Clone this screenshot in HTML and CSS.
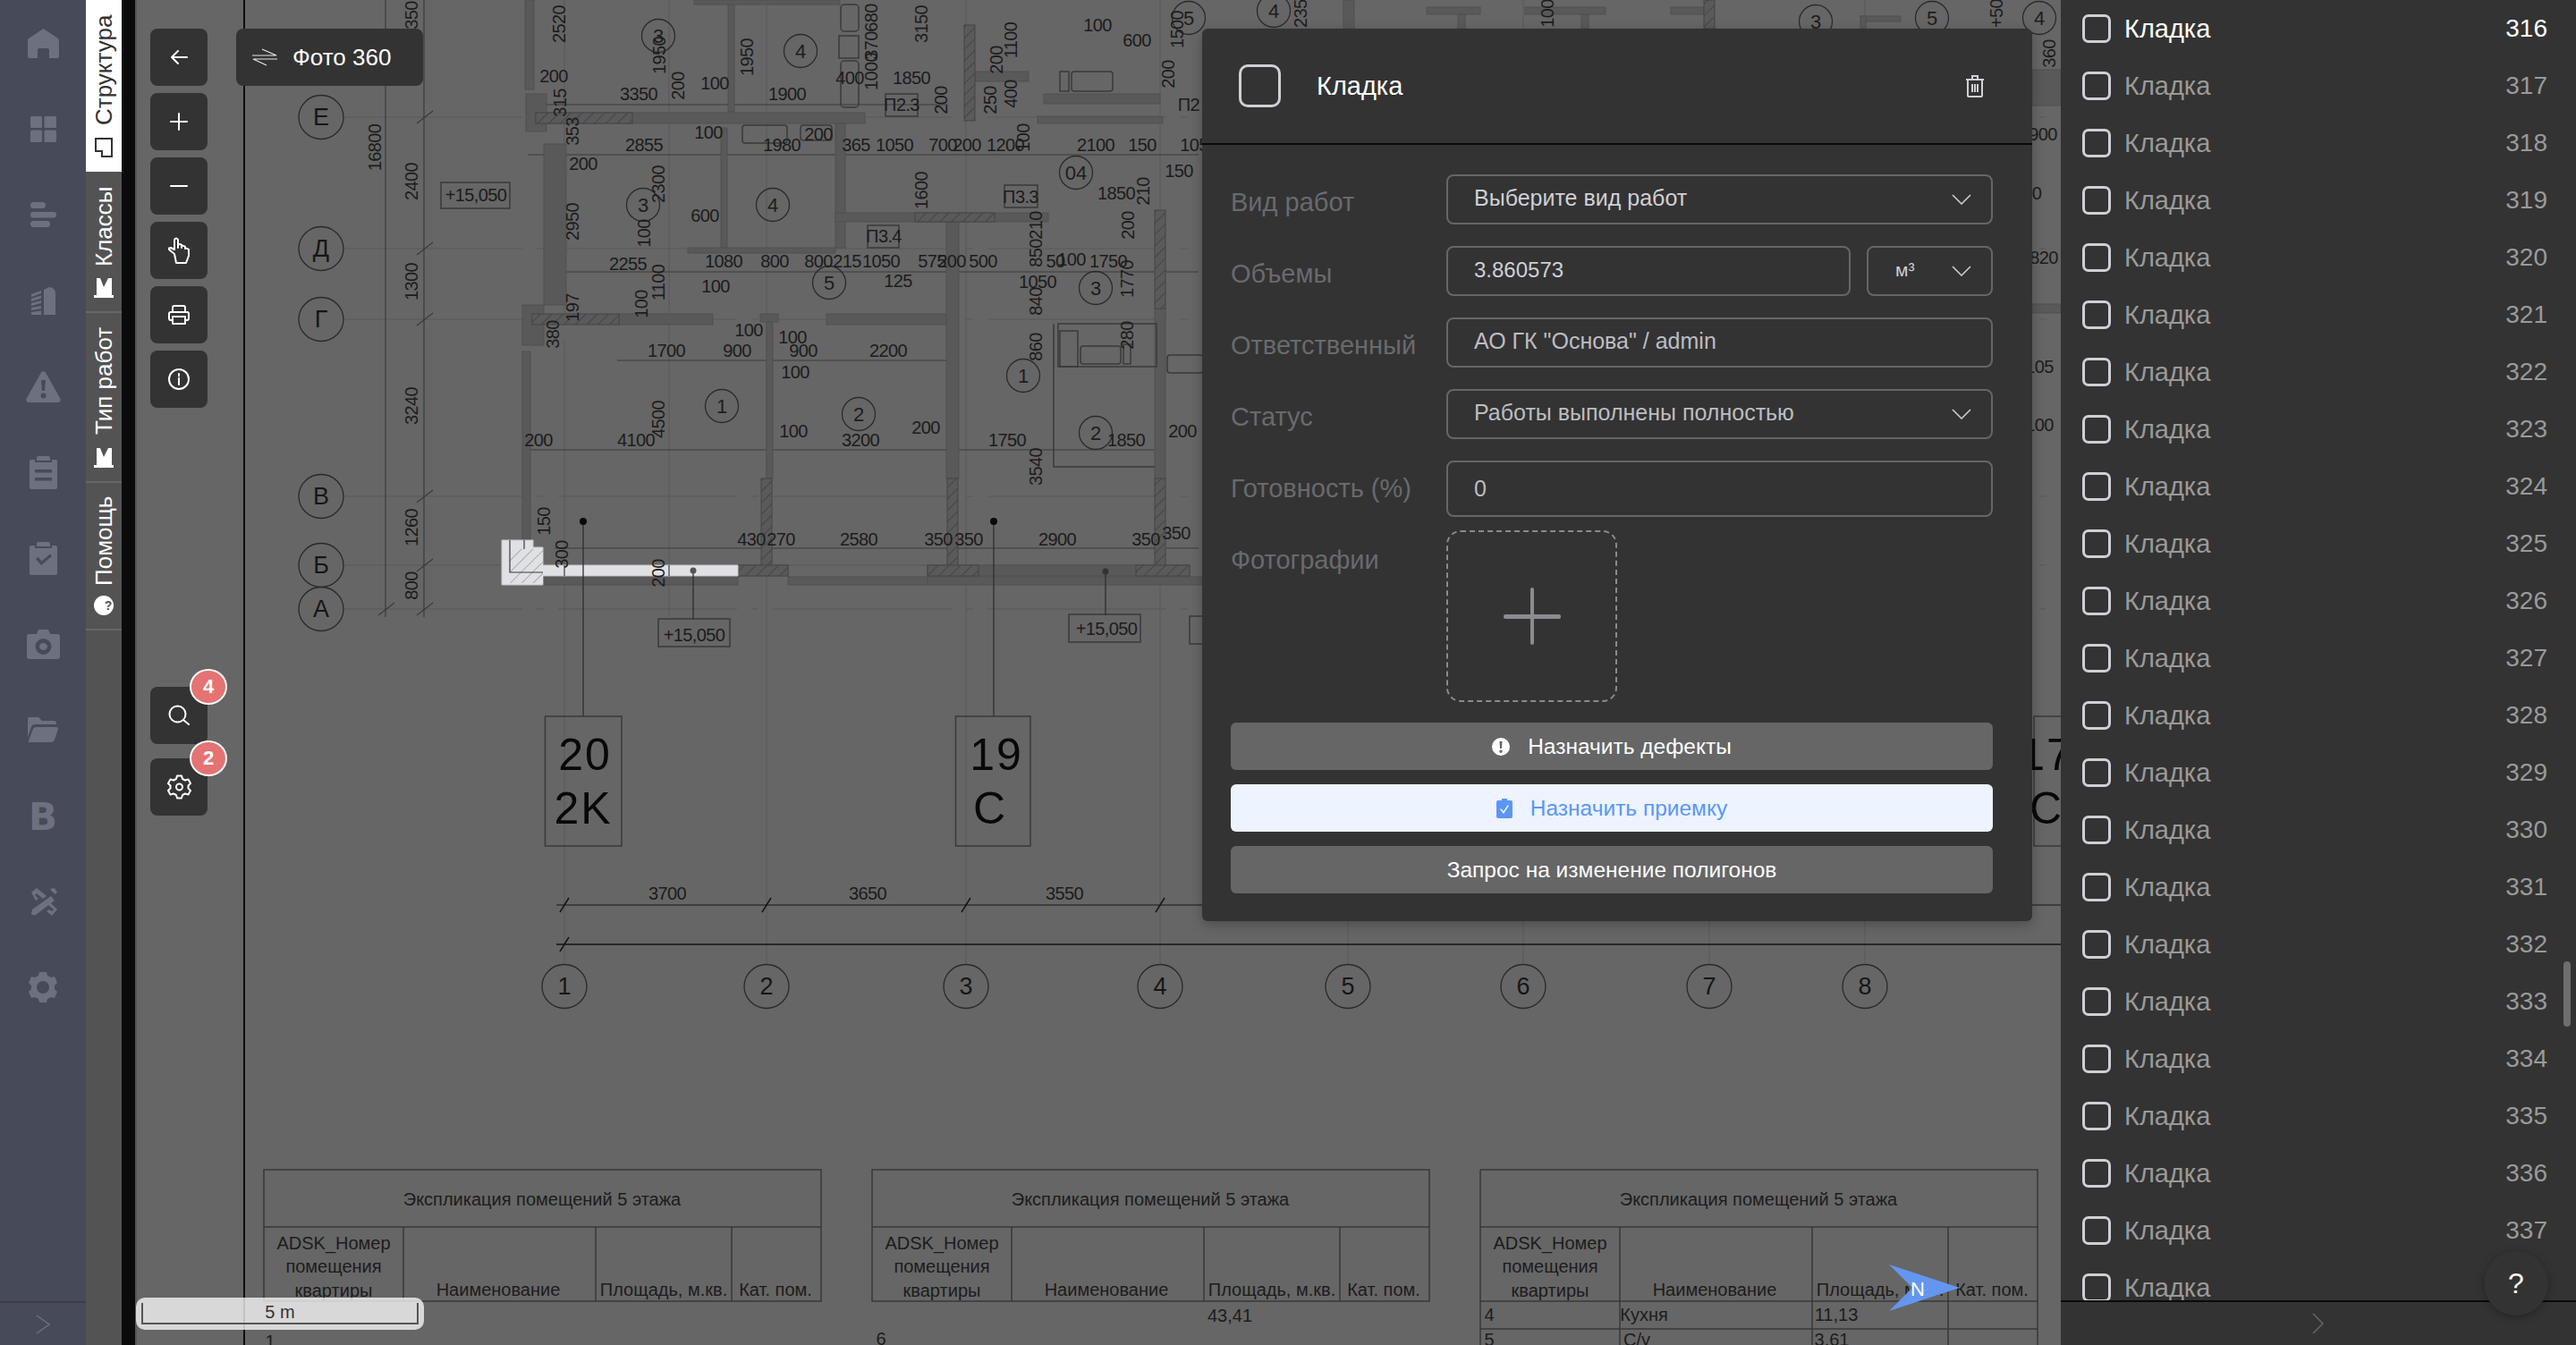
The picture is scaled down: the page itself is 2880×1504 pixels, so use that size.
FILE: index.html
```html
<!DOCTYPE html>
<html lang="ru">
<head>
<meta charset="utf-8">
<title>Кладка</title>
<link rel="stylesheet" href="styles.css">
</head>
<body>
<div class="app">
  <nav class="nav">
    <div class="nav-items">
      <div class="nav-item"><svg width="35" height="33" viewBox="0 0 35 33"><path d="M17.500 0 L34 11 Q35 12 35 14 V31 Q35 33 33 33 H24 V24 Q24 22 22 22 H13 Q11 22 11 24 V33 H2 Q0 33 0 31 V14 Q0 12 1 11Z"/></svg></div>
      <div class="nav-item"><svg width="29" height="29" viewBox="0 0 29 29"><rect width="13" height="13" rx="1.500"/><rect x="15.500" width="13.500" height="13" rx="1.500"/><rect y="15.500" width="13" height="13.500" rx="1.500"/><rect x="15.500" y="15.500" width="13.500" height="13.500" rx="1.500"/></svg></div>
      <div class="nav-item"><svg width="29" height="28" viewBox="0 0 29 28"><rect width="17" height="7" rx="3.500"/><rect y="11" width="29" height="6.500" rx="3.250"/><rect y="21" width="22" height="7" rx="3.500"/></svg></div>
      <div class="nav-item"><svg width="27" height="31" viewBox="0 0 27 31"><path d="M14 3 L20 0 Q27 1 27 7 V31 H14Z M0 8 L11 4 V7 L0 11Z M0 13 L11 9.500 V12.500 L0 16Z M0 18 L11 15 V18 L0 21Z M0 23 L11 21 V24 L0 26Z M0 28 L11 26.500 V31 H0Z"/></svg></div>
      <div class="nav-item"><svg width="39" height="35" viewBox="0 0 39 35"><path fill-rule="evenodd" d="M17 1.500 Q19.500 -1 22 1.500 L38 30 Q40 35 35 35 H4 Q-1 35 1 30Z M17 10 L18 22 H21 L22 10Z M19.500 24.500 A3 3 0 1 0 19.500 30.500 A3 3 0 1 0 19.500 24.500Z"/></svg></div>
      <div class="nav-item"><svg width="31" height="37" viewBox="0 0 31 37"><path fill-rule="evenodd" d="M10 0 H21 Q23 0 23 2 V5 H8 V2 Q8 0 10 0Z M2 4 H6 V7 H25 V4 H29 Q31 4 31 6 V35 Q31 37 29 37 H2 Q0 37 0 35 V6 Q0 4 2 4Z M6 15 V18.500 H25 V15Z M6 24 V27.500 H25 V24Z"/></svg></div>
      <div class="nav-item"><svg width="31" height="37" viewBox="0 0 31 37"><path fill-rule="evenodd" d="M10 0 H21 Q23 0 23 2 V5 H8 V2 Q8 0 10 0Z M2 4 H6 V7 H25 V4 H29 Q31 4 31 6 V35 Q31 37 29 37 H2 Q0 37 0 35 V6 Q0 4 2 4Z M7 19 L13 26 L25 16 L23 13.500 L13.500 21.500 L9.500 16.500Z"/></svg></div>
      <div class="nav-item"><svg width="37" height="33" viewBox="0 0 37 33"><path fill-rule="evenodd" d="M11 5 L13 0 H24 L26 5 H34 Q37 5 37 8 V30 Q37 33 34 33 H3 Q0 33 0 30 V8 Q0 5 3 5Z M18.500 10 A9 9 0 1 0 18.500 28 A9 9 0 1 0 18.500 10Z M18.500 15 A4.500 4 0 1 1 18.500 23 A4.500 4 0 1 1 18.500 15Z"/></svg></div>
      <div class="nav-item"><svg width="34" height="28" viewBox="0 0 34 28"><path d="M2 0 H12 L16 4 H29 Q32 4 32 7 V8 H8 Q5 8 4 11 L0 22 V2 Q0 0 2 0Z M9 11 H32 Q34 11 34 13 L30 25 Q29 28 26 28 H2 Q0 28 1 26 L6 13 Q7 11 9 11Z"/></svg></div>
      <div class="nav-item"><span class="nav-b">B</span></div>
      <div class="nav-item"><svg width="31" height="31" viewBox="0 0 31 31"><path d="M3 24 L24 9 L28 14 L7 30 Q3 31 2 29Z M2 5 L8 0 L19 9 L15 12 L8 6 L6 8 L10 12 L7 14Z M21 19 L24 17 L31 24 L25 31 L19 26 L22 24 L25 26 L27 24Z M23 1 L28 0 L31 5 L29 7 L25 4Z"/></svg></div>
      <div class="nav-item"><svg width="32" height="34" viewBox="0 0 32 34"><path fill-rule="evenodd" d="M12 0 H20 L21 4 L25 6 L29 5 L32 12 L29 15 V19 L32 22 L29 29 L25 28 L21 30 L20 34 H12 L11 30 L7 28 L3 29 L0 22 L3 19 V15 L0 12 L3 5 L7 6 L11 4Z M16 10 A7 7 0 1 0 16 24 A7 7 0 1 0 16 10Z"/></svg></div>
    </div>
    <div class="nav-foot"><svg width="18" height="24" viewBox="0 0 18 24"><path class="chev" d="M2 2 L16 12 L2 22"/></svg></div>
  </nav>

  <aside class="tabs">
    <div class="tab tab-active tab-a">
      <svg class="tab-icon" width="22" height="20" viewBox="0 0 22 20"><path class="tab-line" d="M7 1 H21 V19 H1 V8 H7Z"/></svg>
      <span>Структура</span>
    </div>
    <div class="tab tab-b">
      <svg class="tab-icon" width="22" height="22" viewBox="0 0 22 22"><path class="tab-fill" d="M0 3 H22 V7 L12 11 L22 16 V20 H0Z M0 0 H3 V22 H0Z"/></svg>
      <span>Классы</span>
    </div>
    <div class="tab tab-c">
      <svg class="tab-icon" width="22" height="22" viewBox="0 0 22 22"><path class="tab-fill" d="M0 3 H22 V7 L12 11 L22 16 V20 H0Z M0 0 H3 V22 H0Z"/></svg>
      <span>Тип работ</span>
    </div>
    <div class="tab tab-d">
      <svg class="tab-icon" width="22" height="22" viewBox="0 0 22 22"><circle class="tab-fill" cx="11" cy="11" r="11"/><text class="tab-q" x="11" y="16">?</text></svg>
      <span>Помощь</span>
    </div>
  </aside>

  <div class="gutter"></div>

  <main class="canvas">
    <svg class="plan" width="2153" height="1504" viewBox="151 0 2153 1504">
      <defs>
        <pattern id="hatch" width="9" height="9" patternUnits="userSpaceOnUse" patternTransform="rotate(45)"><rect width="9" height="9" fill="#5a5a5a"/><line x1="0" y1="0" x2="0" y2="9" stroke="#3c3c3c" stroke-width="1.500"/></pattern>
        <pattern id="hatchw" width="9" height="9" patternUnits="userSpaceOnUse" patternTransform="rotate(45)"><rect width="9" height="9" fill="#e0e1e5"/><line x1="0" y1="0" x2="0" y2="9" stroke="#9a9a9a" stroke-width="1.500"/></pattern>
      </defs>

      <rect x="151" y="0" width="2" height="1504" fill="#555"/>
      <rect x="272" y="0" width="2" height="1504" fill="#0f0f0f"/>

      <!-- grid axes -->
      <g class="faint">
        <path d="M631 0V360M631 380V1078M748 0V690M857 0V1078M1080 0V1078M1297 0V1078M1507 0V1078M1703 0V1078M1911 0V1078M2085 0V1078"/>
        <path d="M384 131H2304M384 278H2304M384 357H2304M384 555H2304M384 632H2304M384 681H2304" stroke-dasharray="200 16 8 16"/>
      </g>
      <g class="thin">
        <path d="M431 0V690M474 0V690M610 117H1060M590 173H1340M630 304H1340M690 403H1065M585 503H1290M620 613H1340"/>
        <path d="M466 138L484 124M466 285L484 271M466 364L484 350M466 562L484 548M466 639L484 625M466 688L484 674M423 688L441 674"/>
      </g>

      <!-- walls -->
      <g class="wall">
        <rect x="588" y="105" width="23" height="42"/>
        <rect x="599" y="126" width="368" height="12"/>
        <rect x="608" y="161" width="25" height="180"/>
        <rect x="584" y="341" width="24" height="45"/>
        <rect x="692" y="351" width="105" height="12"/>
        <rect x="924" y="351" width="135" height="12"/>
        <rect x="806" y="143" width="7" height="134"/>
        <rect x="934" y="138" width="11" height="139"/>
        <rect x="769" y="277" width="165" height="6"/>
        <rect x="934" y="238" width="238" height="10"/>
        <rect x="1058" y="248" width="14" height="287"/>
        <rect x="857" y="360" width="7" height="175"/>
        <rect x="850" y="351" width="20" height="9"/>
        <rect x="1291" y="345" width="12" height="190"/>
        <rect x="1167" y="105" width="130" height="11"/>
        <rect x="1160" y="130" width="140" height="8"/>
        <rect x="1087" y="80" width="63" height="11"/>
        <rect x="587" y="0" width="10" height="100"/>
        <rect x="814" y="5" width="7" height="120"/>
        <rect x="776" y="0" width="163" height="5"/>
        <rect x="825" y="632" width="56" height="12"/>
        <rect x="1037" y="632" width="293" height="12"/>
        <rect x="607" y="644" width="218" height="10"/>
        <rect x="881" y="645" width="156" height="9"/>
        <rect x="1037" y="645" width="307" height="9"/>
        <rect x="584" y="393" width="9" height="210"/>
        <rect x="1595" y="8" width="60" height="8"/>
        <rect x="1705" y="8" width="90" height="8"/>
        <rect x="1868" y="8" width="37" height="8"/>
        <rect x="1502" y="0" width="12" height="32"/>
        <rect x="1630" y="16" width="8" height="16"/>
        <rect x="1768" y="16" width="8" height="16"/>
        <rect x="2080" y="18" width="45" height="6"/>
        <rect x="2080" y="18" width="6" height="14"/>
        <rect x="2272" y="78" width="32" height="40"/>
        <rect x="2272" y="340" width="32" height="10"/>
      </g>
      <g class="hatched">
        <rect x="599" y="126" width="108" height="12"/>
        <rect x="595" y="351" width="97" height="12"/>
        <rect x="1023" y="238" width="89" height="10"/>
        <rect x="851" y="535" width="12" height="105"/>
        <rect x="1059" y="535" width="12" height="105"/>
        <rect x="1291" y="235" width="12" height="110"/>
        <rect x="1291" y="535" width="12" height="108"/>
        <rect x="1078" y="28" width="12" height="107"/>
        <rect x="825" y="632" width="56" height="12"/>
        <rect x="1037" y="632" width="57" height="12"/>
        <rect x="1270" y="632" width="60" height="12"/>
        <rect x="1905" y="0" width="12" height="32"/>
      </g>

      <!-- fixtures -->
      <g class="fix">
        <rect x="940" y="5" width="20" height="30" rx="4"/><rect x="938" y="40" width="22" height="25"/><rect x="940" y="68" width="20" height="52" rx="4"/>
        <rect x="830" y="140" width="50" height="20" rx="3"/><rect x="895" y="140" width="35" height="17" rx="3"/>
        <rect x="1198" y="80" width="46" height="22" rx="3"/><rect x="1185" y="80" width="10" height="22"/>
        <rect x="1185" y="370" width="20" height="40"/><rect x="1208" y="387" width="45" height="20" rx="3"/><rect x="1256" y="385" width="8" height="22"/>
        <rect x="1305" y="397" width="40" height="20" rx="3"/>
        <rect x="1183" y="362" width="110" height="48" fill="none"/>
        <path d="M1178 362V522H1291"/>
        <rect x="990" y="105" width="36" height="25"/><rect x="1123" y="207" width="37" height="25"/><rect x="970" y="252" width="35" height="25"/>
        <rect x="493" y="204" width="77" height="29"/>
        <rect x="736" y="692" width="80" height="31"/><rect x="1195" y="687" width="80" height="31"/><rect x="1330" y="689" width="40" height="31"/>
      </g>

      <!-- highlighted element -->
      <path class="hl" d="M561 604 H596 V612 H607 V632 H825 V644 H607 V654 H561Z"/>
      <rect x="570" y="614" width="37" height="38" fill="url(#hatchw)"/>
      <path class="thin" d="M570 604V640H607M586 604V614M631 632V644M748 632V644"/>

      <!-- leaders -->
      <g class="lead">
        <path d="M652 583V801M1111 583V801M775 638V692M1236 638V688"/>
      </g>
      <circle cx="652" cy="583" r="4" fill="#0a0a0a"/><circle cx="1111" cy="583" r="4" fill="#0a0a0a"/><circle cx="775" cy="638" r="3.500" fill="#555"/><circle cx="1236" cy="639" r="3.500" fill="#333"/>
      <g class="fix"><rect x="609.500" y="801" width="85.500" height="145"/><rect x="1068.500" y="801" width="83.500" height="145"/><rect x="2274" y="801" width="60" height="145"/></g>
      <text class="big" x="654" y="844">20</text><text class="big" x="652" y="904">2K</text>
      <text class="big" x="1114" y="844">19</text><text class="big" x="1107" y="904">C</text>
      <text class="big" x="2288" y="844">17</text><text class="big" x="2288" y="904">C</text>

      <!-- axis bubbles -->
      <g class="bubble">
        <ellipse cx="359" cy="131" rx="25" ry="24.500"/><ellipse cx="359" cy="278" rx="25" ry="24.500"/><ellipse cx="359" cy="357" rx="25" ry="24.500"/><ellipse cx="359" cy="555" rx="25" ry="24.500"/><ellipse cx="359" cy="632" rx="25" ry="24.500"/><ellipse cx="359" cy="681" rx="25" ry="24.500"/>
        <ellipse cx="631" cy="1103" rx="25" ry="24.500"/><ellipse cx="857" cy="1103" rx="25" ry="24.500"/><ellipse cx="1080" cy="1103" rx="25" ry="24.500"/><ellipse cx="1297" cy="1103" rx="25" ry="24.500"/><ellipse cx="1507" cy="1103" rx="25" ry="24.500"/><ellipse cx="1703" cy="1103" rx="25" ry="24.500"/><ellipse cx="1911" cy="1103" rx="25" ry="24.500"/><ellipse cx="2085" cy="1103" rx="25" ry="24.500"/>
        <ellipse cx="736" cy="40" rx="18.500" ry="18.500"/><ellipse cx="895" cy="57" rx="18.500" ry="18.500"/><ellipse cx="719" cy="229" rx="18.500" ry="18.500"/><ellipse cx="864" cy="229" rx="18.500" ry="18.500"/><ellipse cx="927" cy="316" rx="18.500" ry="18.500"/><ellipse cx="1203" cy="193" rx="18.500" ry="18.500"/><ellipse cx="1225" cy="322" rx="18.500" ry="18.500"/><ellipse cx="1144" cy="420" rx="18.500" ry="18.500"/><ellipse cx="807" cy="454" rx="18.500" ry="18.500"/><ellipse cx="960" cy="463" rx="18.500" ry="18.500"/><ellipse cx="1225" cy="484" rx="18.500" ry="18.500"/><ellipse cx="1329" cy="20" rx="18.500" ry="18.500"/>
        <ellipse cx="1424" cy="12" rx="18.500" ry="18.500"/><ellipse cx="2030" cy="24" rx="18.500" ry="18.500"/><ellipse cx="2160" cy="20" rx="18.500" ry="18.500"/><ellipse cx="2280" cy="20" rx="18.500" ry="18.500"/>
      </g>
      <g class="ax">
        <text x="359" y="131">Е</text><text x="359" y="278">Д</text><text x="359" y="357">Г</text><text x="359" y="555">В</text><text x="359" y="632">Б</text><text x="359" y="681">А</text>
        <text x="631" y="1103">1</text><text x="857" y="1103">2</text><text x="1080" y="1103">3</text><text x="1297" y="1103">4</text><text x="1507" y="1103">5</text><text x="1703" y="1103">6</text><text x="1911" y="1103">7</text><text x="2085" y="1103">8</text>
      </g>
      <g class="num">
        <text x="736" y="40">3</text><text x="895" y="57">4</text><text x="719" y="229">3</text><text x="864" y="229">4</text><text x="927" y="316">5</text><text x="1203" y="193">04</text><text x="1225" y="322">3</text><text x="1144" y="420">1</text><text x="807" y="454">1</text><text x="960" y="463">2</text><text x="1225" y="484">2</text><text x="1329" y="20">5</text><text x="1424" y="12">4</text><text x="2030" y="24">3</text><text x="2160" y="20">5</text><text x="2280" y="20">4</text>
      </g>

      <!-- dimensions -->
      <g class="t">
        <text transform="translate(419 165) rotate(-90)">16800</text><text transform="translate(460 17) rotate(-90)">350</text><text transform="translate(460 203) rotate(-90)">2400</text><text transform="translate(460 315) rotate(-90)">1300</text><text transform="translate(460 454) rotate(-90)">3240</text><text transform="translate(460 590) rotate(-90)">1260</text><text transform="translate(460 655) rotate(-90)">800</text>
        <text x="532" y="218">+15,050</text><text x="776" y="710">+15,050</text><text x="1237" y="703">+15,050</text>
        <text transform="translate(625 27) rotate(-90)">2520</text><text transform="translate(737 62) rotate(-90)">1950</text><text transform="translate(835 64) rotate(-90)">1950</text><text transform="translate(974 20) rotate(-90)">680</text><text transform="translate(974 51) rotate(-90)">370</text><text transform="translate(974 80) rotate(-90)">1000</text><text transform="translate(1030 27) rotate(-90)">3150</text>
        <text x="1227" y="28">100</text><text x="1271" y="45">600</text><text transform="translate(1316 33) rotate(-90)">1500</text><text transform="translate(1130 45) rotate(-90)">1100</text>
        <text x="619" y="85">200</text><text x="714" y="105">3350</text><text transform="translate(758 96) rotate(-90)">200</text><text x="799" y="93">100</text><text x="880" y="105">1900</text><text x="950" y="87">400</text><text x="1019" y="87">1850</text><text x="1008" y="117">П2.3</text>
        <text transform="translate(1052 112) rotate(-90)">200</text><text transform="translate(1107 112) rotate(-90)">250</text><text transform="translate(1114 67) rotate(-90)">200</text><text transform="translate(1130 105) rotate(-90)">400</text><text transform="translate(1306 83) rotate(-90)">200</text><text x="1329" y="117">П2</text>
        <text transform="translate(640 147) rotate(-90)">353</text><text transform="translate(626 115) rotate(-90)">315</text>
        <text x="720" y="162">2855</text><text x="792" y="148">100</text><text x="874" y="162">1980</text><text x="915" y="150">200</text><text x="957" y="162">365</text><text x="1000" y="162">1050</text><text x="1054" y="162">700</text><text x="1081" y="162">200</text><text x="1124" y="162">1200</text><text transform="translate(1144 154) rotate(-90)">100</text><text x="1225" y="162">2100</text><text x="1277" y="162">150</text><text x="1335" y="162">105</text>
        <text x="652" y="183">200</text><text transform="translate(736 206) rotate(-90)">2300</text><text transform="translate(640 248) rotate(-90)">2950</text><text x="788" y="241">600</text><text transform="translate(1030 213) rotate(-90)">1600</text><text x="1318" y="191">150</text><text x="1248" y="216">1850</text><text transform="translate(1278 214) rotate(-90)">210</text><text x="1141" y="220">П3.3</text><text x="988" y="264">П3.4</text>
        <text transform="translate(720 261) rotate(-90)">100</text><text transform="translate(1158 252) rotate(-90)">210</text><text transform="translate(1261 252) rotate(-90)">200</text><text transform="translate(1158 283) rotate(-90)">850</text>
        <text x="702" y="295">2255</text><text x="809" y="292">1080</text><text x="866" y="292">800</text><text x="915" y="292">800</text><text x="947" y="292">215</text><text x="985" y="292">1050</text><text x="1042" y="292">575</text><text x="1064" y="292">200</text><text x="1099" y="292">500</text><text x="1180" y="292">50</text><text x="1198" y="290">100</text><text x="1239" y="292">1750</text>
        <text transform="translate(736 316) rotate(-90)">1100</text><text x="800" y="320">100</text><text x="1004" y="314">125</text><text x="1160" y="315">1050</text><text transform="translate(1260 312) rotate(-90)">1770</text><text transform="translate(640 344) rotate(-90)">197</text><text transform="translate(717 340) rotate(-90)">100</text><text transform="translate(1158 337) rotate(-90)">840</text><text transform="translate(618 374) rotate(-90)">380</text>
        <text x="837" y="369">100</text><text x="886" y="377">100</text><text x="745" y="392">1700</text><text x="824" y="392">900</text><text x="898" y="392">900</text><text x="993" y="392">2200</text><text transform="translate(1158 388) rotate(-90)">860</text><text transform="translate(1260 375) rotate(-90)">280</text><text x="889" y="416">100</text>
        <text transform="translate(736 469) rotate(-90)">4500</text><text x="602" y="492">200</text><text x="711" y="492">4100</text><text x="887" y="482">100</text><text x="962" y="492">3200</text><text x="1035" y="478">200</text><text x="1126" y="492">1750</text><text x="1259" y="492">1850</text><text x="1322" y="482">200</text><text transform="translate(1158 522) rotate(-90)">3540</text>
        <text transform="translate(608 583) rotate(-90)">150</text><text transform="translate(628 620) rotate(-90)">300</text><text x="840" y="603">430</text><text x="873" y="603">270</text><text x="960" y="603">2580</text><text x="1049" y="603">350</text><text x="1083" y="603">350</text><text x="1182" y="603">2900</text><text x="1281" y="603">350</text><text x="1315" y="596">350</text><text transform="translate(736 641) rotate(-90)">200</text>
        <text transform="translate(1454 10) rotate(-90)">2350</text><text transform="translate(1730 15) rotate(-90)">100</text><text transform="translate(2232 15) rotate(-90)">+50</text><text transform="translate(2291 60) rotate(-90)">360</text><text x="2284" y="150">900</text><text x="2277" y="216">0</text><text x="2285" y="288">820</text><text x="2280" y="410">105</text><text x="2280" y="475">100</text>
        <text x="746" y="999">3700</text><text x="970" y="999">3650</text><text x="1190" y="999">3550</text>
      </g>

      <!-- bottom dimension chains -->
      <path class="dim" d="M622 1012H2304"/>
      <path class="dimb" d="M622 1056H2304"/>
      <path class="dimb" d="M626 1020L636 1004M626 1064L636 1048M852 1020L862 1004M1075 1020L1085 1004M1292 1020L1302 1004"/>

      <!-- tables -->
      <g class="table">
        <path d="M295 1308H918V1455H295ZM295 1372H918M451 1372V1455M666 1372V1455M818 1372V1455"/>
        <path d="M975 1308H1598V1455H975ZM975 1372H1598M1131 1372V1455M1346 1372V1455M1498 1372V1455"/>
        <path d="M1655 1308H2278V1504M1655 1308V1504M1655 1372H2278M1811 1372V1504M2026 1372V1504M2178 1372V1504M1655 1455H2278M1655 1486H2278"/>
      </g>
      <g class="t t-table">
        <text x="606" y="1341">Экспликация помещений 5 этажа</text><text x="373" y="1390">ADSK_Номер</text><text x="373" y="1416">помещения</text><text x="373" y="1443">квартиры</text><text x="557" y="1442">Наименование</text><text x="742" y="1442">Площадь, м.кв.</text><text x="867" y="1442">Кат. пом.</text>
        <text x="1286" y="1341">Экспликация помещений 5 этажа</text><text x="1053" y="1390">ADSK_Номер</text><text x="1053" y="1416">помещения</text><text x="1053" y="1443">квартиры</text><text x="1237" y="1442">Наименование</text><text x="1422" y="1442">Площадь, м.кв.</text><text x="1547" y="1442">Кат. пом.</text>
        <text x="1966" y="1341">Экспликация помещений 5 этажа</text><text x="1733" y="1390">ADSK_Номер</text><text x="1733" y="1416">помещения</text><text x="1733" y="1443">квартиры</text><text x="1917" y="1442">Наименование</text><text x="2102" y="1442">Площадь, м.кв.</text><text x="2227" y="1442">Кат. пом.</text>
        <text x="302" y="1500">1</text><text x="985" y="1497">6</text><text x="1375" y="1471">43,41</text>
        <text x="1665" y="1470">4</text><text x="1838" y="1470">Кухня</text><text x="2053" y="1470">11,13</text><text x="1665" y="1498">5</text><text x="1830" y="1498">С/у</text><text x="2048" y="1498">3,61</text>
      </g>

      <!-- north arrow -->
      <path class="north" d="M2112 1414 L2191 1440 L2112 1466 L2138 1440Z"/>
      <text class="north-n" x="2144" y="1441">N</text>
    </svg>

    <div class="tools">
      <div class="tool-group">
        <button class="tool"><svg width="20" height="20" viewBox="0 0 20 20"><path d="M19 10H2M9 3L2 10L9 17"/></svg></button>
        <button class="tool"><svg width="20" height="20" viewBox="0 0 20 20"><path d="M10 1V19M1 10H19"/></svg></button>
        <button class="tool"><svg width="20" height="20" viewBox="0 0 20 20"><path d="M1 10H19"/></svg></button>
        <button class="tool"><svg width="24" height="30" viewBox="0 0 24 30"><path d="M7 19 L1 14 Q0 12 3 12 L7 14 V3 Q9 0 11 3 V12 V9 Q13 7 15 9 V12 V10 Q17 9 19 11 V13 Q21 12 23 14 V21 L20 29 H9Z"/></svg></button>
        <button class="tool"><svg width="24" height="22" viewBox="0 0 24 22"><path d="M5 8V3Q5 1 7 1H17Q19 1 19 3V8M5 17H3Q1 17 1 15V10Q1 8 3 8H21Q23 8 23 10V15Q23 17 21 17H19M5 13H19V21H5Z"/></svg></button>
        <button class="tool"><svg width="24" height="24" viewBox="0 0 24 24"><circle cx="12" cy="12" r="11"/><path d="M12 11V18M12 6V8.500"/></svg></button>
      </div>
      <div class="tool-group tool-group-b">
        <button class="tool"><svg width="24" height="24" viewBox="0 0 24 24"><circle cx="10.500" cy="10.500" r="9"/><path d="M17 17L23 22"/></svg><span class="badge">4</span></button>
        <button class="tool"><svg width="27" height="28" viewBox="0 0 27 28"><path d="M11 1.500H16L17 5L20 6.500L23.500 5.500L26 10L23.500 12.500V15.500L26 18L23.500 22.500L20 21.500L17 23L16 26.500H11L10 23L7 21.500L3.500 22.500L1 18L3.500 15.500V12.500L1 10L3.500 5.500L7 6.500L10 5Z"/><circle cx="13.500" cy="14" r="3.500"/></svg><span class="badge">2</span></button>
      </div>
    </div>

    <div class="photo-btn">
      <svg width="28" height="20" viewBox="0 0 28 20"><path d="M0 8H27L11 1M28 12H1L16 19"/></svg>
      <span>Фото 360</span>
    </div>

    <div class="scale"><div class="scale-inner">5 m</div></div>

    <section class="panel">
      <header class="panel-head">
        <span class="check check-lg"></span>
        <span class="panel-title">Кладка</span>
        <svg class="trash" width="22" height="26" viewBox="0 0 22 26"><path d="M1 6H21M8 5V2H14V5M3 6V24Q3 25 4 25H18Q19 25 19 24V6M8 11V20M11 11V20M14 11V20"/></svg>
      </header>
      <div class="form">
        <label class="lbl">Вид работ</label>
        <div class="field field-select"><span>Выберите вид работ</span><svg class="arrow" width="22" height="12" viewBox="0 0 22 12"><path d="M1 1L11 11L21 1"/></svg></div>

        <label class="lbl">Объемы</label>
        <div class="field-pair">
          <div class="field field-num"><span>3.860573</span></div>
          <div class="field field-unit"><span>м³</span><svg class="arrow" width="22" height="12" viewBox="0 0 22 12"><path d="M1 1L11 11L21 1"/></svg></div>
        </div>

        <label class="lbl">Ответственный</label>
        <div class="field field-muted"><span>АО ГК "Основа" / admin</span></div>

        <label class="lbl">Статус</label>
        <div class="field field-select field-muted"><span>Работы выполнены полностью</span><svg class="arrow" width="22" height="12" viewBox="0 0 22 12"><path d="M1 1L11 11L21 1"/></svg></div>

        <label class="lbl">Готовность (%)</label>
        <div class="field field-tall field-muted"><span>0</span></div>

        <label class="lbl">Фотографии</label>
        <div class="drop"><span class="plus"></span></div>
      </div>
      <div class="actions">
        <button class="act"><svg width="20" height="20" viewBox="0 0 20 20"><path fill="#fff" fill-rule="evenodd" d="M10 0A10 10 0 1 0 10 20A10 10 0 1 0 10 0ZM8.500 4H11.500L11 12H9ZM10 13.500A1.700 1.700 0 1 1 10 16.900A1.700 1.700 0 1 1 10 13.500Z"/></svg><span>Назначить дефекты</span></button>
        <button class="act act-light"><svg width="18" height="22" viewBox="0 0 18 22"><path fill="#5b96f7" fill-rule="evenodd" d="M6 0H12V2H16Q18 2 18 4V20Q18 22 16 22H2Q0 22 0 20V4Q0 2 2 2H6ZM4 12L8 17L14 8L12.800 7L8 14L5 11Z"/></svg><span>Назначить приемку</span></button>
        <button class="act"><span>Запрос на изменение полигонов</span></button>
      </div>
    </section>
  </main>

  <aside class="list-wrap">
    <div class="list">
      <div class="row row-first"><span class="check"></span><span class="row-name">Кладка</span><span class="row-num">316</span></div>
      <div class="row"><span class="check"></span><span class="row-name">Кладка</span><span class="row-num">317</span></div>
      <div class="row"><span class="check"></span><span class="row-name">Кладка</span><span class="row-num">318</span></div>
      <div class="row"><span class="check"></span><span class="row-name">Кладка</span><span class="row-num">319</span></div>
      <div class="row"><span class="check"></span><span class="row-name">Кладка</span><span class="row-num">320</span></div>
      <div class="row"><span class="check"></span><span class="row-name">Кладка</span><span class="row-num">321</span></div>
      <div class="row"><span class="check"></span><span class="row-name">Кладка</span><span class="row-num">322</span></div>
      <div class="row"><span class="check"></span><span class="row-name">Кладка</span><span class="row-num">323</span></div>
      <div class="row"><span class="check"></span><span class="row-name">Кладка</span><span class="row-num">324</span></div>
      <div class="row"><span class="check"></span><span class="row-name">Кладка</span><span class="row-num">325</span></div>
      <div class="row"><span class="check"></span><span class="row-name">Кладка</span><span class="row-num">326</span></div>
      <div class="row"><span class="check"></span><span class="row-name">Кладка</span><span class="row-num">327</span></div>
      <div class="row"><span class="check"></span><span class="row-name">Кладка</span><span class="row-num">328</span></div>
      <div class="row"><span class="check"></span><span class="row-name">Кладка</span><span class="row-num">329</span></div>
      <div class="row"><span class="check"></span><span class="row-name">Кладка</span><span class="row-num">330</span></div>
      <div class="row"><span class="check"></span><span class="row-name">Кладка</span><span class="row-num">331</span></div>
      <div class="row"><span class="check"></span><span class="row-name">Кладка</span><span class="row-num">332</span></div>
      <div class="row"><span class="check"></span><span class="row-name">Кладка</span><span class="row-num">333</span></div>
      <div class="row"><span class="check"></span><span class="row-name">Кладка</span><span class="row-num">334</span></div>
      <div class="row"><span class="check"></span><span class="row-name">Кладка</span><span class="row-num">335</span></div>
      <div class="row"><span class="check"></span><span class="row-name">Кладка</span><span class="row-num">336</span></div>
      <div class="row"><span class="check"></span><span class="row-name">Кладка</span><span class="row-num">337</span></div>
      <div class="row"><span class="check"></span><span class="row-name">Кладка</span></div>
    </div>
    <div class="list-foot"><svg width="14" height="24" viewBox="0 0 14 24"><path class="chev-dim" d="M1 1L12 12L1 23"/></svg></div>
    <div class="thumb"></div>
    <div class="help">?</div>
  </aside>
</div>
</body>
</html>
```

FILE: styles.css
```css
* { box-sizing: border-box; }
html, body { margin: 0; padding: 0; height: 100%; background: #333; }
body { font-family: "Liberation Sans", Arial, sans-serif; color: #fff; overflow: hidden; }

.app { display: grid; grid-template-columns: 96px 40px 15px 1fr 576px; width: 2880px; height: 1504px; overflow: hidden; }

/* left nav */
.nav { background: #474a59; display: flex; flex-direction: column; justify-content: space-between; }
.nav-items { display: flex; flex-direction: column; }
.nav-item { height: 96px; display: flex; align-items: center; justify-content: center; }
.nav-item svg { fill: #6c707f; display: block; }
.nav-b { font: bold 42px "DejaVu Sans", sans-serif; color: #6c707f; line-height: 1; padding-top: 3px; }
.nav-foot { height: 49px; border-top: 2px solid #3a3c48; display: flex; align-items: center; justify-content: center; }
.nav-foot svg { display: block; }
.nav-foot .chev { fill: none; stroke: #6c707f; stroke-width: 1.500; }

/* vertical tabs */
.tabs { background: #545353; display: flex; flex-direction: column; }
.tab { display: flex; align-items: center; gap: 15px; width: 40px; padding-top: 15px; writing-mode: vertical-rl; transform: rotate(180deg); font-size: 26px; line-height: 40px; white-space: nowrap; border-top: 2px solid #676767; flex: none; }
.tab-a { height: 192px; }
.tab-b { height: 158px; gap: 13px; }
.tab-c { height: 190px; }
.tab-d { height: 165px; gap: 11px; }
.tab-active { background: #fff; color: #333; border-top-color: #fff; }
.tab-icon { display: block; flex: none; transform: rotate(90deg); }
.tab-line { fill: none; stroke: #333; stroke-width: 2; }
.tab-fill { fill: #fff; }
.tab-q { font: bold 14px "Liberation Sans", sans-serif; fill: #545353; text-anchor: middle; }

.gutter { background: #0b0b0b; }

/* canvas */
.canvas { position: relative; background: #666; overflow: hidden; }
.plan { position: absolute; left: 0; top: 0; display: block; }

.faint path { fill: none; stroke: #585858; stroke-width: 1; }
.thin, .thin path { fill: none; stroke: #3b3b3b; stroke-width: 1.200; }
.wall rect { fill: #595959; stroke: #505050; stroke-width: 1; }
.hatched rect { fill: url(#hatch); stroke: #444; stroke-width: 1; }
.fix rect, .fix path { fill: none; stroke: #3a3a3a; stroke-width: 1.500; }
.hl { fill: #e0e1e5; stroke: #c8c8c8; stroke-width: 1; }
.lead path { fill: none; stroke: #2f2f2f; stroke-width: 1.300; }
.bubble ellipse { fill: none; stroke: #2a2a2a; stroke-width: 1.300; }
.big { font: 50px "Liberation Sans", sans-serif; fill: #080808; text-anchor: middle; dominant-baseline: central; letter-spacing: 2px; }
.ax text { font: 27px "Liberation Sans", sans-serif; fill: #161616; text-anchor: middle; dominant-baseline: central; }
.num text { font: 22px "Liberation Sans", sans-serif; fill: #1d1d1d; text-anchor: middle; dominant-baseline: central; }
.t text { font: 20px "Liberation Sans", sans-serif; fill: #1c1c1c; text-anchor: middle; dominant-baseline: central; letter-spacing: -0.6px; }
.t-table text { font-size: 20px; letter-spacing: 0; }
.dim { fill: none; stroke: #3e3e3e; stroke-width: 2; }
.dimb { fill: none; stroke: #141414; stroke-width: 1.500; }
.table path { fill: none; stroke: #383838; stroke-width: 1.500; }
.north { fill: #6496f0; }
.north-n { font: 22px "Liberation Sans", sans-serif; fill: #fff; text-anchor: middle; dominant-baseline: central; }

/* map tools */
.tools { position: absolute; left: 17px; top: 32px; bottom: 592px; display: flex; flex-direction: column; justify-content: space-between; }
.tool-group { display: flex; flex-direction: column; gap: 8px; }
.tool-group-b { gap: 16px; }
.tool { position: relative; width: 64px; height: 64px; border: 0; padding: 0; border-radius: 8px; background: #333; display: flex; align-items: center; justify-content: center; }
.tool svg { display: block; fill: none; stroke: #fff; stroke-width: 2; stroke-linecap: round; stroke-linejoin: round; }
.badge { position: absolute; left: 44px; top: -20px; width: 42px; height: 40px; border-radius: 50%; background: #e57373; border: 2px solid #fff; font-size: 22px; font-weight: bold; color: #fff; display: flex; align-items: center; justify-content: center; }

.photo-btn { position: absolute; left: 113px; top: 32px; width: 209px; height: 64px; border-radius: 8px; background: #333; display: flex; align-items: center; padding-left: 18px; gap: 17px; font-size: 26px; color: #fff; }
.photo-btn svg { display: block; fill: none; stroke: #e8e8e8; stroke-width: 1.200; }

.scale { position: absolute; left: 1px; top: 1451px; width: 322px; height: 36px; padding: 6px 6px; border-radius: 10px; background: rgba(255,255,255,.75); }
.scale-inner { height: 24px; border: 2px solid #555; border-top: 0; font-size: 20px; line-height: 20px; text-align: center; color: #333; }

/* detail panel */
.panel { position: absolute; left: 1193px; top: 32px; width: 928px; height: 998px; background: #333; border-radius: 6px; box-shadow: 0 4px 14px rgba(0,0,0,.25); display: flex; flex-direction: column; }
.panel-head { height: 130px; border-bottom: 2px solid #0a0a0a; display: flex; align-items: center; padding: 0 53px 0 41px; flex: none; }
.panel-title { font-size: 29px; margin-left: 40px; flex: 1; color: #fff; }
.trash { display: block; fill: none; stroke: #d0d1d6; stroke-width: 2; }
.check { display: block; width: 32px; height: 32px; border: 3px solid #cfd0d6; border-radius: 7px; flex: none; }
.check-lg { width: 47px; height: 48px; border-radius: 10px; }

.form { display: grid; grid-template-columns: 241px 611px; grid-auto-rows: 56px; row-gap: 24px; padding: 33px 0 0 32px; }
.lbl { font-size: 29px; color: #696a6e; line-height: 63px; white-space: nowrap; }
.field { display: flex; align-items: center; justify-content: space-between; height: 56px; border: 2px solid #666; border-radius: 8px; padding: 0 22px 3px 29px; font-size: 25px; color: #cfd0d6; background: #333; }
.field-muted { color: #bcbdc2; }
.field-tall { height: 63px; padding-bottom: 0; }
.field-num { flex: 1; font-size: 24px; }
.field-unit { width: 141px; flex: none; font-size: 21px; padding-left: 30px; }
.field-pair { display: flex; gap: 18px; }
.arrow { display: block; fill: none; stroke: #d0d1d6; stroke-width: 1.500; flex: none; margin-top: 3px; }
.drop { width: 191px; height: 192px; margin-top: -2px; border: 2px dashed #8b8b8b; border-radius: 16px; display: flex; align-items: center; justify-content: center; }
.plus { position: relative; display: block; width: 64px; height: 64px; }
.plus::before, .plus::after { content: ""; position: absolute; background: #8b8b90; border-radius: 2px; }
.plus::before { left: 0; right: 0; top: 30px; height: 5px; }
.plus::after { top: 0; bottom: 0; left: 30px; width: 4px; }

.actions { position: absolute; left: 32px; top: 776px; width: 852px; display: flex; flex-direction: column; gap: 16px; }
.act { height: 53px; border: 0; padding: 0; border-radius: 6px; background: #666; color: #fff; font: 24.500px "Liberation Sans", sans-serif; display: flex; align-items: center; justify-content: center; gap: 20px; }
.act svg { display: block; }
.act-light { background: #edf4ff; color: #5b96f7; }

/* right list */
.list-wrap { position: relative; background: #333; display: flex; flex-direction: column; }
.list { height: 1456px; overflow: hidden; border-bottom: 2px solid #0a0a0a; flex: none; }
.row { height: 64px; display: flex; align-items: center; padding: 0 32px 0 24px; gap: 15px; font-size: 29px; color: #9a9a9a; }
.row-first { color: #fff; }
.row-name { flex: 1; }
.row-num { font-size: 28px; }
.list-foot { flex: 1; display: flex; align-items: center; justify-content: center; }
.list-foot svg { display: block; }
.chev-dim { fill: none; stroke: #666; stroke-width: 1.500; }
.thumb { position: absolute; right: 6px; top: 1075px; width: 8px; height: 73px; border-radius: 4px; background: #6e6e6e; }
.help { position: absolute; left: 473px; top: 1399px; width: 72px; height: 72px; border-radius: 50%; background: #333; box-shadow: 0 2px 10px rgba(0,0,0,.3); display: flex; align-items: center; justify-content: center; font-size: 32px; color: #fff; }
```
